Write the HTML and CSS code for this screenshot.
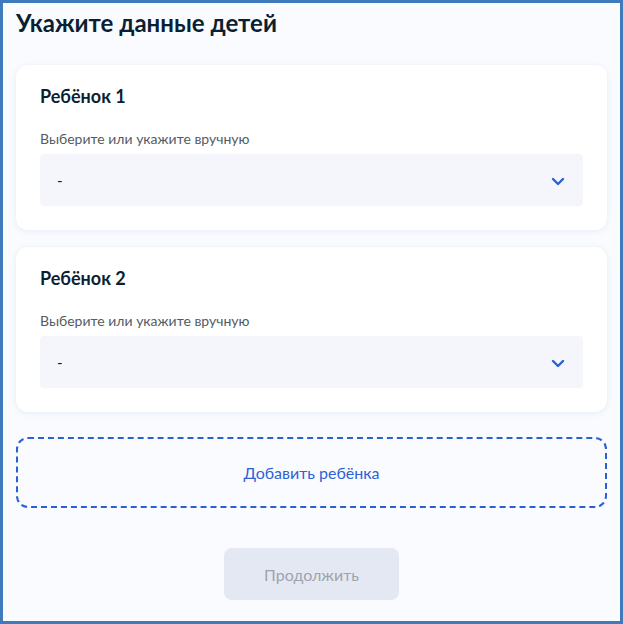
FILE: index.html
```html
<!DOCTYPE html>
<html lang="ru">
<head>
<meta charset="utf-8">
<link rel="stylesheet" href="styles.css">
</head>
<body>
<div class="frame">
  <h1 class="title">Укажите данные детей</h1>
  <div class="list">
    <section class="card">
      <h2 class="card-title">Ребёнок 1</h2>
      <div class="label">Выберите или укажите вручную</div>
      <div class="select">
        <span class="value">-</span>
        <svg class="chev" width="14" height="9" viewBox="0 0 14 9"><path d="M2 2l5 5 5-5" fill="none" stroke="#2b5fd6" stroke-width="2.4" stroke-linecap="round" stroke-linejoin="round"/></svg>
      </div>
    </section>
    <section class="card">
      <h2 class="card-title">Ребёнок 2</h2>
      <div class="label">Выберите или укажите вручную</div>
      <div class="select">
        <span class="value">-</span>
        <svg class="chev" width="14" height="9" viewBox="0 0 14 9"><path d="M2 2l5 5 5-5" fill="none" stroke="#2b5fd6" stroke-width="2.4" stroke-linecap="round" stroke-linejoin="round"/></svg>
      </div>
    </section>
    <div class="add">Добавить ребёнка</div>
  </div>
  <div class="actions">
    <button class="btn" disabled>Продолжить</button>
  </div>
</div>
</body>
</html>
```
FILE: styles.css
```css
* { box-sizing: border-box; }
html, body { margin: 0; padding: 0; }
body {
  font-family: Lato, "Noto Sans", sans-serif;
  color: #0b1f33;
}
.frame {
  width: 623px;
  height: 624px;
  border: 3px solid #3f7abd;
  background: #f9fbfe;
  padding: 0 13px;
  overflow: hidden;
}
.title {
  margin: 0;
  padding-top: 6px;
  font-size: 24px;
  line-height: 28px;
  font-weight: 700;
  color: #0b1f33;
}
.list {
  margin-top: 28px;
  display: flex;
  flex-direction: column;
  gap: 17px;
}
.card {
  background: #fff;
  border-radius: 12px;
  padding: 19px 24px 24px;
  box-shadow: 0 1px 6px rgba(60, 100, 170, 0.10);
}
.card-title {
  margin: 0;
  font-size: 18px;
  line-height: 24px;
  font-weight: 700;
  color: #0b1f33;
}
.label {
  margin-top: 21px;
  font-size: 14px;
  line-height: 20px;
  color: #535c66;
}
.select {
  margin-top: 5px;
  height: 52px;
  background: #f5f6fb;
  border-radius: 4px;
  display: flex;
  align-items: center;
  justify-content: space-between;
  padding: 0 18px 0 17px;
}
.value {
  font-size: 15px;
  color: #0b1f33;
}
.chev { display: block; margin-top: 2px; }
.add {
  margin-top: 8px;
  height: 71px;
  border: 2px dashed #2b5fd6;
  border-radius: 12px;
  display: flex;
  align-items: center;
  justify-content: center;
  font-size: 16px;
  color: #2e62d6;
}
.actions {
  display: flex;
  justify-content: center;
  margin-top: 40px;
}
.btn {
  width: 175px;
  height: 52px;
  border: none;
  border-radius: 8px;
  background: #e4e8f2;
  color: #9ca4ae;
  font-family: Lato, "Noto Sans", sans-serif;
  font-size: 16px;
}
```
